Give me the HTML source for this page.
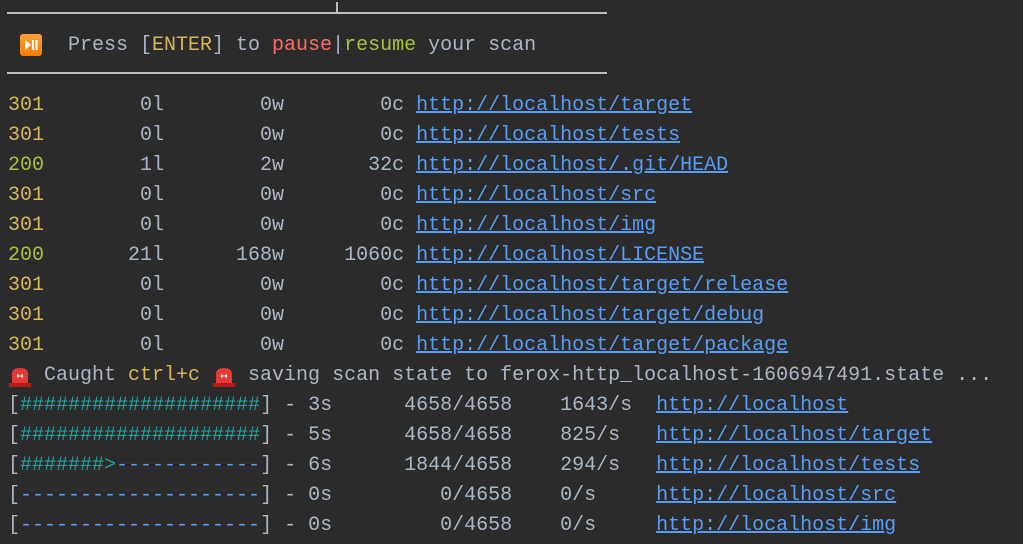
<!DOCTYPE html>
<html><head><meta charset="utf-8"><style>
html,body{margin:0;padding:0;background:#2b2b2b;width:1023px;height:544px;overflow:hidden}
.l{position:absolute;left:8px;height:30px;line-height:30px;white-space:pre;font-family:"Liberation Mono",monospace;font-size:20px;color:#a9b7c6}
.y{color:#d6b759}.g{color:#a6c23a}.u{color:#589df6;text-decoration:underline}.r{color:#ff6b68}.t{color:#2a9d9d}.b{color:#589df6}
.sep{position:absolute;left:7px;width:600px;height:2px;background:#bdbdbd}
.ic{display:inline-block;width:24px;height:30px;vertical-align:top;position:relative}
</style></head><body>
<div class="sep" style="top:12px"></div>
<div style="position:absolute;left:336px;top:2px;width:2px;height:11px;background:#bdbdbd"></div>
<div class="sep" style="top:72px"></div>
<div style="position:absolute;left:20px;top:34px;width:22px;height:22px;border-radius:3px;background:linear-gradient(#ffa13a,#f57c00)">
<svg width="22" height="22" viewBox="0 0 22 22"><path d="M5 6 L11 11 L5 16 Z" fill="#fff"/><rect x="12" y="6" width="2" height="10" fill="#fff"/><rect x="15.5" y="6" width="2" height="10" fill="#fff"/></svg></div>
<div class="l" style="top:31px;left:68px">Press [<span class="y">ENTER</span>] to <span class="r">pause</span>|<span class="g">resume</span> your scan</div>
<div class="l" style="top:91px"><span class="y">301</span>        0l        0w        0c <span class="u">http://localhost/target</span></div>
<div class="l" style="top:121px"><span class="y">301</span>        0l        0w        0c <span class="u">http://localhost/tests</span></div>
<div class="l" style="top:151px"><span class="g">200</span>        1l        2w       32c <span class="u">http://localhost/.git/HEAD</span></div>
<div class="l" style="top:181px"><span class="y">301</span>        0l        0w        0c <span class="u">http://localhost/src</span></div>
<div class="l" style="top:211px"><span class="y">301</span>        0l        0w        0c <span class="u">http://localhost/img</span></div>
<div class="l" style="top:241px"><span class="g">200</span>       21l      168w     1060c <span class="u">http://localhost/LICENSE</span></div>
<div class="l" style="top:271px"><span class="y">301</span>        0l        0w        0c <span class="u">http://localhost/target/release</span></div>
<div class="l" style="top:301px"><span class="y">301</span>        0l        0w        0c <span class="u">http://localhost/target/debug</span></div>
<div class="l" style="top:331px"><span class="y">301</span>        0l        0w        0c <span class="u">http://localhost/target/package</span></div>
<div class="l" style="top:361px"><span class="ic"><svg width="24" height="30" viewBox="0 0 24 30"><path d="M4 22 L4 13 Q4 7 12 7 Q20 7 20 13 L20 22 Z" fill="#e53935"/><rect x="1" y="22" width="22" height="4" fill="#b71c1c"/><path d="M9 13 L12 15 L15 13 L15 17 L12 15 L9 17Z" fill="#fff"/></svg></span> Caught <span class="y">ctrl+c</span> <span class="ic"><svg width="24" height="30" viewBox="0 0 24 30"><path d="M4 22 L4 13 Q4 7 12 7 Q20 7 20 13 L20 22 Z" fill="#e53935"/><rect x="1" y="22" width="22" height="4" fill="#b71c1c"/><path d="M9 13 L12 15 L15 13 L15 17 L12 15 L9 17Z" fill="#fff"/></svg></span> saving scan state to ferox-http_localhost-1606947491.state ...</div>
<div class="l" style="top:391px">[<span class="t">####################</span>] - 3s      4658/4658    1643/s  <span class="u">http://localhost</span></div>
<div class="l" style="top:421px">[<span class="t">####################</span>] - 5s      4658/4658    825/s   <span class="u">http://localhost/target</span></div>
<div class="l" style="top:451px">[<span class="t">#######&gt;</span><span class="b">------------</span>] - 6s      1844/4658    294/s   <span class="u">http://localhost/tests</span></div>
<div class="l" style="top:481px">[<span class="b">--------------------</span>] - 0s         0/4658    0/s     <span class="u">http://localhost/src</span></div>
<div class="l" style="top:511px">[<span class="b">--------------------</span>] - 0s         0/4658    0/s     <span class="u">http://localhost/img</span></div>
</body></html>
